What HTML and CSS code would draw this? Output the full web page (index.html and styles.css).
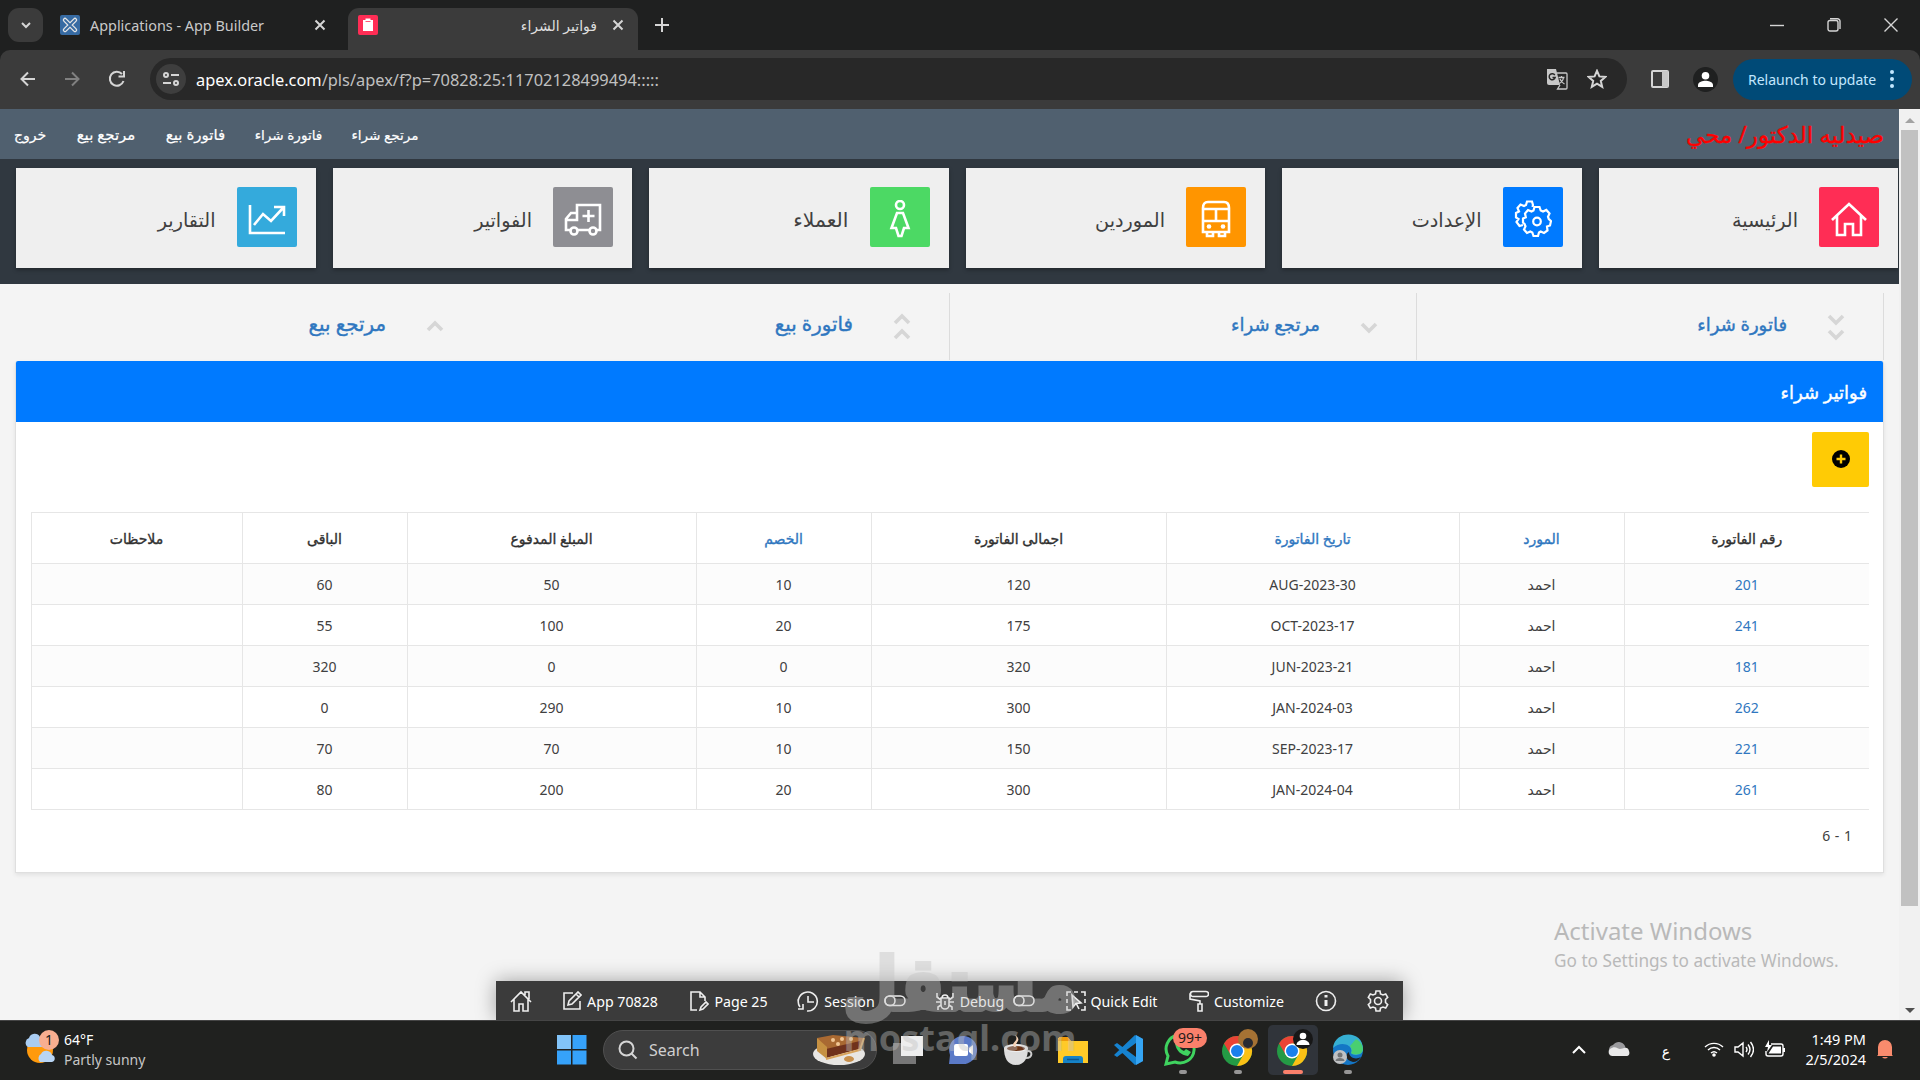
FILE: index.html
```html
<!DOCTYPE html>
<html lang="ar">
<head>
  <meta charset="UTF-8">
  <meta name="viewport" content="width=device-width, initial-scale=1.0">
  <title>فواتير الشراء</title>
  <link rel="stylesheet" href="styles.css">
</head>
<body>
  <!-- Browser tabs -->
  <div class="tab-strip">
    <button class="tab-search"><svg width="12" height="12" viewBox="0 0 12 12"><path d="M2 4l4 4 4-4" class="line thick"/></svg></button>
    <div class="tab">
      <svg class="favicon" width="20" height="20" viewBox="0 0 20 20"><rect width="20" height="20" rx="2" fill="#376ba3"/><path d="M5 5l10 10M15 5L5 15" stroke="#e6e6e6" stroke-width="4.500" stroke-linecap="round"/><path d="M5 5l10 10M15 5L5 15" stroke="#376ba3" stroke-width="1.800" stroke-linecap="round"/></svg>
      <span class="tab-title">Applications - App Builder</span>
      <svg width="12" height="12" viewBox="0 0 12 12"><path d="M1.500 1.500l9 9M10.500 1.500l-9 9" class="line thick"/></svg>
    </div>
    <div class="tab active">
      <svg class="favicon" width="20" height="20" viewBox="0 0 20 20"><rect width="20" height="20" rx="2" fill="#ff2d55"/><path d="M5 5h10v11H5zM7.500 3.500h5v3h-5z" fill="#fff"/><path d="M7.500 6.500h5" stroke="#ff2d55" stroke-width=".8"/></svg>
      <span class="tab-title rtl">فواتير الشراء</span>
      <svg width="12" height="12" viewBox="0 0 12 12"><path d="M1.500 1.500l9 9M10.500 1.500l-9 9" class="line thick"/></svg>
    </div>
    <svg class="new-tab" width="14" height="14" viewBox="0 0 14 14"><path d="M7 0v14M0 7h14" class="line thick"/></svg>
    <div class="window-buttons">
      <svg width="14" height="14" viewBox="0 0 14 14"><path d="M0 7.500h14" class="line"/></svg>
      <svg width="14" height="14" viewBox="0 0 14 14"><rect x="1" y="2.500" width="10" height="10.500" rx="2" class="line"/><path d="M3 .7h7.500a2.500 2.500 0 0 1 2.500 2.500V11" class="line"/></svg>
      <svg width="14" height="14" viewBox="0 0 14 14"><path d="M.5.500l13 13M13.500.500l-13 13" class="line"/></svg>
    </div>
  </div>

  <!-- Address bar -->
  <div class="browser-bar">
    <div class="history">
      <svg width="16" height="16" viewBox="0 0 16 16"><path d="M15 8H2M8 1.500L1.500 8 8 14.500" class="line thick"/></svg>
      <svg class="dim" width="16" height="16" viewBox="0 0 16 16"><path d="M1 8h13M8 1.500L14.500 8 8 14.500" class="line thick"/></svg>
      <svg width="18" height="18" viewBox="0 0 18 18"><path d="M15.500 11A7 7 0 1 1 14 4M16 1v5.500h-5.500" class="line thick"/></svg>
    </div>
    <div class="omnibox">
      <span class="site-info"><svg width="16" height="16" viewBox="0 0 16 16"><circle cx="3" cy="4" r="2" class="line thick"/><path d="M8 4h8M0 12h8" class="line thick"/><circle cx="13" cy="12" r="2" class="line thick"/></svg></span>
      <span class="url"><b>apex.oracle.com</b>/pls/apex/f?p=70828:25:11702128499494:::::</span>
      <svg class="translate" width="22" height="22" viewBox="0 0 22 22"><path d="M1 1h9l4 16H3a2 2 0 0 1-2-2z" fill="#c7c7c7"/><path d="M8.800 7.200a3 3 0 1 0 .3 2.300H6.500" fill="none" stroke="#282828" stroke-width="1.500"/><path d="M10.500 5H20a1 1 0 0 1 1 1v14a1 1 0 0 1-1 1h-8.500l2.500-4M12.500 9.500h6M15.500 8v1.500M17.500 9.500c-.5 3-2 5-4.500 6M14 11c1 2.500 2.500 4 4.500 5" fill="none" stroke="#c7c7c7" stroke-width="1.300"/></svg>
      <svg width="20" height="20" viewBox="0 0 20 20"><path d="M10 1.800l2.400 5.600 6 .5-4.600 4 1.400 6-5.200-3.200-5.200 3.200 1.400-6-4.600-4 6-.5z" class="line thick"/></svg>
    </div>
    <svg class="side-panel" width="18" height="18" viewBox="0 0 18 18"><rect x="1" y="1" width="16" height="16" rx="1" class="line thick"/><path d="M11 1h6v16h-6z" fill="#c7c7c7"/></svg>
    <span class="profile"><svg width="25" height="25" viewBox="0 0 25 25"><circle cx="12.500" cy="8.700" r="3.800" fill="#fff"/><path d="M5 20v-2c0-3 5-4.200 7.500-4.200S20 15 20 18v2z" fill="#fff"/></svg></span>
    <button class="relaunch">Relaunch to update <svg width="4" height="18" viewBox="0 0 4 18"><circle cx="2" cy="2" r="2"/><circle cx="2" cy="9" r="2"/><circle cx="2" cy="16" r="2"/></svg></button>
  </div>

  <div class="viewport">
    <div class="page">
      <div class="header">
        <div class="logo">صيدليه الدكتور/ محي</div>
        <ul class="nav">
          <li class="long">مرتجع شراء</li>
          <li class="long">فاتورة شراء</li>
          <li>فاتورة بيع</li>
          <li>مرتجع بيع</li>
          <li class="exit">خروج</li>
        </ul>
      </div>

      <div class="cards">
        <div class="card">
          <span class="card-icon pink"><svg width="36" height="36" viewBox="0 0 36 36"><path d="M1 19L18 3l17 16M6 15v19h8V23h8v11h8V15" class="glyph"/></svg></span>
          <h3>الرئيسية</h3>
        </div>
        <div class="card">
          <span class="card-icon blue"><svg width="38" height="38" viewBox="0 0 38 38"><path d="M9 25l-3.500 1-3-4 2-3-2.500-1.500V13l3-1.500L3.500 8l3-3.500L10 6l2-1 1-3.500h5L19 5l-.5 2" class="glyph gear"/><path d="M20.500 7h5l1.200 3.500 2.300 1 3.300-1.600 3.200 3.600-1.500 3.200.8 2.300L37 21l-1 4.500-3 1 .5 4-3.500 2.500-3.300-1.500-1.700 1-1 3.500h-4.500l-1.200-3.500-2-1-3.300 1.500-3-3.500 1.500-3.200-1-2.300L9 22.500v-4l2.800-1.200-.8-3.800 3-3.500 3.500 1.500 2-1z" class="glyph gear"/><circle cx="23" cy="21.500" r="3.800" class="glyph gear"/></svg></span>
          <h3>الإعدادت</h3>
        </div>
        <div class="card">
          <span class="card-icon orange"><svg width="30" height="38" viewBox="0 0 30 38"><path d="M7 2h16q5 0 5 6v24H2V8q0-6 5-6zM3 9h24M3 21h24M15 9v12M6 32v4h6v-4M18 32v4h6v-4" class="glyph"/><circle cx="8" cy="26.500" r="2.300" fill="#fff"/><circle cx="22" cy="26.500" r="2.300" fill="#fff"/></svg></span>
          <h3>الموردين</h3>
        </div>
        <div class="card">
          <span class="card-icon green"><svg width="22" height="38" viewBox="0 0 22 38"><circle cx="11" cy="5" r="4" class="glyph"/><path d="M8 13h6l5.500 15H15l-2.500 8h-3L7 28H2.500z" class="glyph"/></svg></span>
          <h3 class="wide">العملاء</h3>
        </div>
        <div class="card">
          <span class="card-icon gray"><svg width="38" height="34" viewBox="0 0 38 34"><path d="M7 28H2V17l5-6h6V3h23v25h-4M13 28h13M2 18h11v-7M24.500 8v12M18.500 14h12" class="glyph"/><circle cx="10" cy="29" r="3.500" class="glyph"/><circle cx="29" cy="29" r="3.500" class="glyph"/></svg></span>
          <h3>الفواتير</h3>
        </div>
        <div class="card">
          <span class="card-icon cyan"><svg width="38" height="32" viewBox="0 0 38 32"><path d="M2 2v28h35M6 22l9-11 8 7L35 5M26 4h10v9" class="glyph"/></svg></span>
          <h3>التقارير</h3>
        </div>
      </div>

      <div class="links">
        <a class="link"><svg width="20" height="30" viewBox="0 0 20 30"><path d="M3 4l7 7 7-7M3 19l7 7 7-7"/></svg><span>فاتورة شراء</span></a>
        <a class="link"><svg width="20" height="30" viewBox="0 0 20 30"><path d="M3 12l7 7 7-7"/></svg><span>مرتجع شراء</span></a>
        <a class="link sale"><svg width="20" height="30" viewBox="0 0 20 30"><path d="M3 11l7-7 7 7M3 26l7-7 7 7"/></svg><span>فاتورة بيع</span></a>
        <a class="link sale"><svg width="20" height="30" viewBox="0 0 20 30"><path d="M3 18l7-7 7 7"/></svg><span>مرتجع بيع</span></a>
      </div>

      <div class="region">
        <h2 class="region-title">فواتير شراء</h2>
        <div class="region-body">
          <button class="add-button"><svg width="18" height="18" viewBox="0 0 18 18"><circle cx="9" cy="9" r="9"/><path d="M9 4.500v9M4.500 9h9" stroke="#ffcb05" stroke-width="2.400"/></svg></button>
          <table class="report">
            <colgroup><col class="c1"><col class="c2"><col class="c3"><col class="c4"><col class="c5"><col class="c6"><col class="c7"><col class="c8"></colgroup>
            <thead>
              <tr><th>رقم الفاتورة</th><th><a>المورد</a></th><th><a>تاريخ الفاتورة</a></th><th>اجمالى الفاتورة</th><th><a>الخصم</a></th><th>المبلغ المدفوع</th><th>الباقى</th><th>ملاحظات</th></tr>
            </thead>
            <tbody>
              <tr><td><a>201</a></td><td>احمد</td><td>AUG-2023-30</td><td>120</td><td>10</td><td>50</td><td>60</td><td></td></tr>
              <tr><td><a>241</a></td><td>احمد</td><td>OCT-2023-17</td><td>175</td><td>20</td><td>100</td><td>55</td><td></td></tr>
              <tr><td><a>181</a></td><td>احمد</td><td>JUN-2023-21</td><td>320</td><td>0</td><td>0</td><td>320</td><td></td></tr>
              <tr><td><a>262</a></td><td>احمد</td><td>JAN-2024-03</td><td>300</td><td>10</td><td>290</td><td>0</td><td></td></tr>
              <tr><td><a>221</a></td><td>احمد</td><td>SEP-2023-17</td><td>150</td><td>10</td><td>70</td><td>70</td><td></td></tr>
              <tr><td><a>261</a></td><td>احمد</td><td>JAN-2024-04</td><td>300</td><td>20</td><td>200</td><td>80</td><td></td></tr>
            </tbody>
          </table>
          <div class="pagination"><span>6 - 1</span></div>
        </div>
      </div>
    </div>
    <div class="scrollbar">
      <svg width="10" height="5" viewBox="0 0 10 5"><path d="M0 5l5-5 5 5z" fill="#a3a3a3"/></svg>
      <div class="thumb"></div>
      <svg width="10" height="5" viewBox="0 0 10 5"><path d="M0 0l5 5 5-5z" fill="#505050"/></svg>
    </div>

    <div class="activate">
      <p class="activate-title">Activate Windows</p>
      <p class="activate-text">Go to Settings to activate Windows.</p>
    </div>

    <!-- Developer toolbar -->
    <div class="dev-toolbar">
      <span><svg width="22" height="22" viewBox="0 0 22 22"><path d="M1 12L11 2l10 10M4 9.500V21h5v-7h4v7h5V9.500M15 5V2h4v7"/></svg></span>
      <span><svg width="20" height="20" viewBox="0 0 20 20"><path d="M11 2H2v16h16v-8M6 14l1-4 9-9 3 3-9 9zM14 3l3 3"/></svg>App 70828</span>
      <span><svg width="20" height="22" viewBox="0 0 20 22"><path d="M8 20H2V2h9l5 5v4M11 2v5h5M11 20l1-3 5-5 2 2-5 5z"/></svg>Page 25</span>
      <span><svg width="22" height="22" viewBox="0 0 22 22"><path d="M3 17a9.500 9.500 0 1 1 7 4M11 6v6h6M1 19h5v-5M1 10.500v-1"/></svg>Session<svg class="toggle" width="22" height="12" viewBox="0 0 22 12"><rect x="1" y="1" width="20" height="9.500" rx="4.700"/><rect x="1" y="1" width="10" height="9.500" rx="4.700"/></svg></span>
      <span><svg width="20" height="20" viewBox="0 0 20 20"><path d="M6 7h8v7a4 4 0 0 1-8 0zM7 7a3 3 0 0 1 6 0M10 10v4M1 11h5M14 11h5M6 9L2 6V2M14 9l4-3V2M6 14l-3 2v3M14 14l3 2v3"/></svg>Debug<svg class="toggle" width="22" height="12" viewBox="0 0 22 12"><rect x="1" y="1" width="20" height="9.500" rx="4.700"/><rect x="1" y="1" width="10" height="9.500" rx="4.700"/></svg></span>
      <span><svg width="20" height="20" viewBox="0 0 20 20"><path d="M5 1H1v4M8 1h4M15 1h4v4M19 8v4M19 15v4h-4M1 8v4M1 15v4h4"/><path d="M6 4l9 8-5 .5L7 16z" fill="#999"/><path d="M10 12l3 6"/></svg>Quick Edit</span>
      <span><svg width="20" height="22" viewBox="0 0 20 22"><path d="M4 1.500h13a2 2 0 0 1 0 5H4a2 2 0 0 1 0-5zM2 4H1v5l10 2v3M9 14h4v7H9z"/></svg>Customize</span>
      <span><svg width="22" height="22" viewBox="0 0 22 22"><circle cx="11" cy="11" r="9.500"/><path d="M11 10v6M11 5v2.500" stroke-width="3"/></svg></span>
      <span><svg width="22" height="22" viewBox="0 0 22 22"><path d="M9 1h4l.5 3 2.500 1 2.700-1 2 3.300-2.200 2.200v3l2.200 2.200-2 3.300-2.700-1-2.500 1-.5 3H9l-.5-3L6 17l-2.700 1-2-3.300 2.200-2.200v-3L1.300 7.300l2-3.300L6 5l2.500-1z"/><circle cx="11" cy="11" r="3.500"/></svg></span>
    </div>
  </div>

  <!-- Windows taskbar -->
  <div class="taskbar">
    <div class="weather">
      <svg width="36" height="36" viewBox="0 0 36 36"><circle cx="15" cy="21" r="13" fill="#ff9a0c"/><path d="M3 18a5 5 0 0 1 1-9 6 6 0 0 1 11-1l3 10z" fill="#a9cdf3"/><path d="M15 33a5 5 0 0 1 1-8 6 6 0 0 1 11 1 3.600 3.600 0 0 1 0 7z" fill="#b8d5f4"/><circle cx="24" cy="11" r="10" fill="#f8ae90"/><text x="20" y="16" font-size="14" fill="#1c1c1c">1</text></svg>
      <div><p>64°F</p><p class="sub">Partly sunny</p></div>
    </div>
    <svg class="start" width="30" height="30" viewBox="0 0 30 30"><path d="M0 0h14v14H0z" fill="#82c4f9"/><path d="M15.500 0h14v14h-14zM0 15.500h14v14H0zM15.500 15.500h14v14h-14z" fill="#36a2fa"/></svg>
    <div class="search">
      <svg width="20" height="20" viewBox="0 0 20 20"><circle cx="8.500" cy="8.500" r="7" class="line thick"/><path d="M13.500 13.500l5 5" class="line thick"/></svg>
      <span>Search</span>
      <svg class="pie" width="54" height="32" viewBox="0 0 54 32"><ellipse cx="27" cy="20" rx="26" ry="11" fill="#e8e6e3"/><path d="M5 4l16-3 31 3-4 11-33 8z" fill="#a96932"/><path d="M14 15l34-8-2 8-32 9z" fill="#70321c"/><path d="M5 4l10 9v12L5 17z" fill="#c69142"/><path d="M14 25l34-9 4-12" fill="none" stroke="#d8a35b" stroke-width="2"/><circle cx="21" cy="6" r="2" fill="#f1c694"/><circle cx="30" cy="5" r="2" fill="#f1c694"/><circle cx="39" cy="5" r="2" fill="#f1c694"/><circle cx="26" cy="10" r="2" fill="#f1c694"/><ellipse cx="37" cy="25" rx="5" ry="3" fill="#c78f4c"/></svg>
    </div>
    <div class="apps">
      <div class="app"><svg width="32" height="30" viewBox="0 0 32 30"><path d="M1 8h23v21H1z" fill="#777"/><path d="M9 1h22v20H9z" fill="#eee"/></svg></div>
      <div class="app"><svg width="30" height="30" viewBox="0 0 30 30"><path d="M1 29l1-9a14 14 0 1 1 12 9z" fill="#5b7ac7"/><rect x="6" y="9" width="14" height="12" rx="2" fill="#fff"/><path d="M21 13l4-3v10l-4-3z" fill="#fff"/></svg></div>
      <div class="app"><svg width="32" height="32" viewBox="0 0 32 32"><path d="M2 14h24c0 9-3 17-12 17S2 23 2 14z" fill="#ddd"/><path d="M25 17c6-1 6 7-1 7" fill="none" stroke="#ccc" stroke-width="2"/><ellipse cx="14" cy="14" rx="12" ry="4" fill="#eee"/><ellipse cx="14" cy="14.500" rx="9" ry="2.500" fill="#6b3518"/><path d="M12 13c-4-5 6-5 1-12 8 6-1 7 1 12" fill="#f6d2b4"/></svg></div>
      <div class="app"><svg width="32" height="30" viewBox="0 0 32 30"><path d="M1 3h10l3 3h17v22H1z" fill="#ffca28"/><path d="M2 2h9l3 4H1z" fill="#f09a0a"/><path d="M6 28v-4q0-3 3-3h14q3 0 3 3v4z" fill="#1683c7"/><path d="M10 24.500h12" stroke="#095690" stroke-width="1.500"/></svg></div>
      <div class="app"><svg width="30" height="30" viewBox="0 0 30 30"><path d="M1 10l3-2 19 14V8L4 22l-3-2 21-20 8 4v22l-8 4z" fill="#1683d0"/><path d="M23 0l7 4v22l-7 4z" fill="#35a5f4"/></svg></div>
      <div class="app run"><svg class="whatsapp" width="44" height="40" viewBox="0 0 44 40"><path d="M2 37l2-8a14 14 0 1 1 7 6z" fill="none" stroke="#3fd35f" stroke-width="3"/><path d="M11 16c1 8 6 12 13 13l3-4-5-3-2 2c-3-1-4-3-5-5l2-2-2-4z" fill="#3fd35f"/><rect x="9" y="1" width="34" height="20" rx="10" fill="#fa806b"/><text x="14" y="16" font-size="14" fill="#241b19">99+</text></svg></div>
      <div class="app run"><svg class="chrome" width="38" height="38" viewBox="0 0 38 38"><use href="#chrome"/><circle cx="28" cy="10" r="10" fill="#a57234"/><circle cx="28" cy="14" r="5" fill="#292b32"/></svg></div>
      <div class="app current"><svg class="chrome" width="38" height="38" viewBox="0 0 38 38"><g id="chrome"><circle cx="17" cy="22" r="15" fill="#249a45"/><path d="M4 14.500A15 15 0 0 1 30 14.500H17l-6.500 11z" fill="#ea4335"/><path d="M17 14.500h13A15 15 0 0 1 17 37l6.500-11.500z" fill="#fbc116"/><circle cx="17" cy="22" r="7.500" fill="#fff"/><circle cx="17" cy="22" r="6" fill="#1a80ed"/></g><circle cx="28" cy="10" r="10" fill="#171717"/><circle cx="28" cy="7" r="3.300" fill="#fff"/><path d="M21.500 16c0-3 3-5 6.500-5s6.500 2 6.500 5z" fill="#fff"/></svg></div>
      <div class="app run"><svg width="32" height="32" viewBox="0 0 32 32"><circle cx="16" cy="16" r="15" fill="#1476c5"/><path d="M1 14C3-4 31-4 31 15c0 7-10 7-12 4 3-8-10-13-18-5z" fill="#36afd2"/><path d="M24 5c8 4 9 14 3 15-4 1-7 0-8-1 2-3 0-5-1-7z" fill="#49cf70"/><path d="M17 18c0 6 7 8 12 5-2 3-5 5-8 5-8-2-8-8-4-10z" fill="#202020"/><circle cx="8" cy="23" r="7" fill="#bfc1c3"/><circle cx="8" cy="21" r="2.500" fill="#727476"/><path d="M3.500 27c0-4 9-4 9 0" fill="#727476"/></svg></div>
    </div>
    <div class="tray">
      <svg width="14" height="9" viewBox="0 0 14 9"><path d="M1 8l6-6 6 6" class="line thick white"/></svg>
      <svg class="cloud" width="22" height="14" viewBox="0 0 22 14"><path d="M2 11a5 5 0 0 1 3-8 7 7 0 0 1 12 1l2 8z" fill="#9a9a9d"/><path d="M4 14a4 4 0 0 1-2-7c5-4 8 0 10 0s8-4 9 2c1 3 0 5-3 5z" fill="#e9e9e9"/></svg>
      <span class="lang">ع</span>
      <svg class="wifi" width="20" height="16" viewBox="0 0 20 16"><path d="M1 6a13 13 0 0 1 18 0M4 9a8.500 8.500 0 0 1 12 0M7 12a4.500 4.500 0 0 1 6 0" class="line white"/><circle cx="10" cy="14" r="1.800" fill="#fff"/></svg>
      <svg class="speaker" width="20" height="17" viewBox="0 0 20 17"><path d="M1 6h3l5-4v13l-5-4H1zM12 6q2 2.500 0 5M14 3.500q4 5 0 10M16.500 1q6 7.500 0 15" class="line white"/></svg>
      <svg class="battery" width="22" height="18" viewBox="0 0 22 18"><path d="M7 4h10a2 2 0 0 1 2 2v8a2 2 0 0 1-2 2H4a2 2 0 0 1-2-2v-3" class="line white"/><path d="M9 6.500h8v7H4.500zM19 8h2v4h-2zM5 0L1 7h3l-1 5 5-7H5z" fill="#fff"/></svg>
      <div class="clock"><p>1:49 PM</p><p>2/5/2024</p></div>
      <svg width="18" height="20" viewBox="0 0 18 20"><path d="M2 16V8a7 7 0 0 1 14 0v8l1 1H1zM6 18h6q-3 3-6 0z" fill="#f98b6d"/></svg>
    </div>
  </div>

  <div class="watermark"><span class="mark">مستقل</span><span class="site">mostaql.com</span></div>
</body>
</html>
```
FILE: styles.css
```css
* {
  box-sizing: border-box;
}

body {
  margin: 0;
  width: 1920px;
  height: 1080px;
  overflow: hidden;
  font-family: "Noto Sans", "DejaVu Sans", sans-serif;
  font-size: 14px;
  color: #404040;
  background-color: #1f2020;
}

p, h2, h3, ul {
  margin: 0;
  padding: 0;
}

button {
  border: none;
  padding: 0;
  font-family: inherit;
}

svg {
  display: block;
  flex: none;
}

.line {
  fill: none;
  stroke: #d5d5d5;
  stroke-width: 1.4;
}

.thick {
  stroke-width: 2;
}

.white {
  stroke: #fff;
}

/* Tabs */
.tab-strip {
  display: flex;
  align-items: center;
  height: 50px;
  padding-left: 8px;
  background-color: #1f2020;
}

.tab-search {
  display: flex;
  align-items: center;
  justify-content: center;
  width: 35px;
  height: 34px;
  border-radius: 11px;
  background-color: #3b3b3b;
}

.tab {
  display: flex;
  align-items: center;
  width: 290px;
  height: 42px;
  margin-top: 8px;
  padding: 0 14px 8px 10px;
  color: #c9c9c9;
}

.tab:not(.active) {
  width: 298px;
  margin-left: 7px;
  padding-right: 22px;
  font-size: 14.4px;
}

.tab.active {
  background-color: #3b3b3b;
  border-radius: 11px 11px 0 0;
  color: #dedede;
}

.tab-title {
  flex: 1;
  margin: 0 15px 0 10px;
  white-space: nowrap;
}

.rtl {
  direction: rtl;
}

.new-tab {
  margin-left: 17px;
}

.window-buttons {
  display: flex;
  gap: 43px;
  margin-left: auto;
  padding-right: 22px;
}

/* Address bar */
.browser-bar {
  display: flex;
  align-items: center;
  height: 59px;
  padding: 0 8px 1px 0;
  background-color: #3b3b3b;
  border-radius: 10px 10px 0 0;
}

.history {
  display: flex;
  align-items: center;
  gap: 28px;
  width: 150px;
  padding-left: 20px;
}

.dim {
  opacity: .45;
}

.omnibox {
  display: flex;
  align-items: center;
  width: 1477px;
  height: 42px;
  padding: 0 20px 0 6px;
  border-radius: 21px;
  background-color: #282828;
}

.site-info {
  display: flex;
  align-items: center;
  justify-content: center;
  width: 30px;
  height: 30px;
  margin-right: 10px;
  border-radius: 50%;
  background-color: #3e3e3e;
}

.url {
  flex: 1;
  font-size: 16.4px;
  color: #c0c0c0;
}

.url b {
  font-weight: normal;
  color: #fff;
}

.translate {
  margin-right: 19px;
}

.side-panel {
  margin-left: 24px;
}

.profile {
  margin: 0 15px 0 24px;
  border-radius: 50%;
  background-color: #1f2020;
}

.relaunch {
  display: flex;
  align-items: center;
  justify-content: space-between;
  width: 179px;
  height: 41px;
  padding: 0 18px 0 15px;
  border-radius: 21px;
  background-color: #004a77;
  color: #c2e7ff;
  font-size: 14px;
  white-space: nowrap;
}

.relaunch svg {
  fill: #c2e7ff;
}

/* Page */
.viewport {
  position: relative;
  display: flex;
  height: 911px;
  overflow: hidden;
  background-color: #f4f4f4;
}

.page {
  width: 1899px;
  direction: rtl;
}

.header {
  display: flex;
  align-items: center;
  justify-content: space-between;
  height: 50px;
  padding: 0 15px 0 14px;
  background-color: #50606f;
}

.logo {
  font-size: 23px;
  color: #f00;
  -webkit-text-stroke: .3px;
}

.nav {
  display: flex;
  gap: 30.5px;
  list-style: none;
  color: #fff;
  -webkit-text-stroke: .2px;
}

.nav li {
  display: flex;
  align-items: center;
  justify-content: center;
  width: 59px;
  height: 24px;
  font-size: 15px;
  white-space: nowrap;
}

.nav .long {
  width: 66px;
  font-size: 13.6px;
}

.nav .exit {
  width: 32px;
  font-size: 14px;
}

.cards {
  display: grid;
  grid-template-columns: repeat(6, 1fr);
  gap: 17px;
  height: 125px;
  padding: 9px 1px 16px 16px;
  background-color: #303840;
}

.card {
  display: flex;
  align-items: center;
  height: 100px;
  padding: 0 19px 2px;
  background-color: #efefef;
  box-shadow: 0 2px 4px rgba(0, 0, 0, .3);
}

.card-icon {
  display: flex;
  align-items: center;
  justify-content: center;
  width: 60px;
  height: 60px;
  margin-left: 21px;
  padding-top: 4px;
  border-radius: 2px;
}

.pink { background-color: #ff2d55; }
.blue { background-color: #007aff; }
.orange { background-color: #ff9500; }
.green { background-color: #4cd964; }
.gray { background-color: #8e8e93; }
.cyan { background-color: #34aadc; }

.glyph {
  fill: none;
  stroke: #fff;
  stroke-width: 2.6;
}

.gear {
  stroke-width: 2.2;
}

.card h3 {
  padding-top: 4px;
  font-size: 19.2px;
  font-weight: normal;
}

.card .wide {
  font-size: 20.4px;
}

.links {
  display: flex;
  height: 77px;
  padding: 9px 15px 1px;
}

.link {
  display: flex;
  align-items: center;
  width: 467px;
  padding-right: 37px;
  border-right: 1px solid #dcdcdc;
  font-size: 18px;
  color: #2f77c0;
  -webkit-text-stroke: .4px;
}

.link.sale {
  font-size: 19.8px;
}

.link span {
  padding-bottom: 6px;
}

.link:last-child {
  border-right: none;
  padding-right: 38px;
}

.link svg {
  margin-left: 39px;
  fill: none;
  stroke: #d6d6d6;
  stroke-width: 3.6;
}

/* Invoice region */
.region {
  height: 512px;
  margin: 0 15px;
  border: 1px solid #dfdfdf;
  border-top: none;
  border-radius: 3px 3px 0 0;
  background-color: #fff;
  box-shadow: 0 2px 4px rgba(0, 0, 0, .08);
}

.region-title {
  display: flex;
  align-items: center;
  height: 61px;
  padding: 0 16px;
  border-radius: 2px 2px 0 0;
  background-color: #007aff;
  color: #fff;
  font-size: 18px;
  font-weight: normal;
  -webkit-text-stroke: .4px;
}

.region-body {
  padding: 10px 14px 0;
}

.add-button {
  display: flex;
  align-items: center;
  justify-content: center;
  width: 57px;
  height: 55px;
  margin-bottom: 25px;
  padding-bottom: 2px;
  border-radius: 2px;
  background-color: #ffcb05;
}

.report {
  width: 1838px;
  table-layout: fixed;
  border-collapse: collapse;
}

.c1 { width: 245px; }
.c2 { width: 165px; }
.c3 { width: 293px; }
.c4 { width: 295px; }
.c5 { width: 175px; }
.c6 { width: 289px; }
.c7 { width: 165px; }
.c8 { width: 211px; }

.report th,
.report td {
  height: 41px;
  padding: 0;
  border: 1px solid #e6e6e6;
  border-right: none;
  font-size: 14px;
  text-align: center;
}

.report th {
  height: 51px;
  font-weight: normal;
  color: #303030;
  -webkit-text-stroke: .35px;
}

.report tbody tr:nth-child(odd) {
  background-color: #fcfcfc;
}

.report a {
  color: #2f77c0;
}

.pagination {
  padding: 16px 17px;
}

.pagination span {
  direction: ltr;
  display: inline-block;
  word-spacing: 1px;
}

.scrollbar {
  display: flex;
  flex-direction: column;
  align-items: center;
  width: 21px;
  padding: 9px 0 7px;
  background-color: #f1f1f1;
}

.thumb {
  width: 17px;
  height: 776px;
  margin: 7px 0 auto;
  background-color: #c1c1c1;
}

.activate {
  position: absolute;
  left: 1554px;
  top: 803px;
  color: #b9b9b9;
  white-space: nowrap;
}

.activate-title {
  font-size: 24px;
  line-height: 38px;
}

.activate-text {
  font-size: 17.2px;
  line-height: 22px;
}

.dev-toolbar {
  position: absolute;
  left: 496px;
  bottom: 0;
  display: grid;
  grid-template-columns: 50px 128px 109px 137px 130px 123px 127px 52px 51px;
  height: 39px;
  padding-top: 1px;
  background-color: #3b3b3b;
  box-shadow: 0 0 20px rgba(0, 0, 0, .35);
  color: #fff;
  font-size: 14.2px;
}

.dev-toolbar span {
  display: flex;
  align-items: center;
  justify-content: center;
  gap: 5px;
  white-space: nowrap;
}

.dev-toolbar svg {
  fill: none;
  stroke: #eee;
  stroke-width: 1.6;
}

.dev-toolbar .toggle {
  margin-left: 4px;
}

/* Taskbar */
.taskbar {
  display: flex;
  align-items: center;
  height: 60px;
  background-color: #20211f;
  box-shadow: inset 0 1px 0 #454545;
  color: #fff;
}

.weather {
  display: flex;
  align-items: center;
  gap: 3px;
  width: 557px;
  padding: 0 0 1px 25px;
  line-height: 20px;
}

.weather svg {
  margin-bottom: 6px;
}

.sub {
  color: #c6c6c6;
}

.search {
  display: flex;
  align-items: center;
  width: 274px;
  height: 40px;
  margin-left: 16px;
  padding: 0 10px 0 14px;
  border: 1px solid #505050;
  border-radius: 20px;
  background-color: #3c3c3c;
  color: #d0d0d0;
  font-size: 16px;
}

.search span {
  margin-left: 11px;
}

.pie {
  margin-left: auto;
}

.apps {
  display: flex;
  gap: 5px;
  margin-left: 6px;
}

.app {
  display: flex;
  align-items: center;
  justify-content: center;
  position: relative;
  width: 50px;
  height: 50px;
  border-radius: 5px;
}

.whatsapp {
  margin: -6px -5px 0 0;
}

.chrome {
  margin: -5px -2px 0 0;
}

.current {
  background-color: #30343a;
}

.run::after,
.current::after {
  content: "";
  position: absolute;
  bottom: 1px;
  width: 8px;
  height: 4px;
  border-radius: 2px;
  background-color: #969696;
}

.current::after {
  width: 20px;
  background-color: #fa806b;
}

.tray {
  display: flex;
  align-items: center;
  margin-left: auto;
  padding: 0 26px 2px 0;
}

.cloud {
  margin-left: 22px;
}

.lang {
  width: 20px;
  margin: 4px 28px 0 26px;
  text-align: center;
}

.speaker,
.battery {
  margin-left: 10px;
}

.clock {
  width: 80px;
  margin-right: 10px;
  text-align: right;
  font-size: 14.5px;
  line-height: 20px;
  white-space: nowrap;
}

/* Watermark over the lower edge */
.watermark {
  position: absolute;
  left: 840px;
  top: 940px;
  width: 240px;
  display: flex;
  flex-direction: column;
  align-items: center;
  color: #c1c1c1;
  opacity: .41;
  font-weight: bold;
}

.mark {
  font-size: 74px;
  line-height: 84px;
  -webkit-text-stroke: 4px;
  transform: scaleX(.87);
}

.site {
  font-size: 36px;
  line-height: 28px;
}
```
